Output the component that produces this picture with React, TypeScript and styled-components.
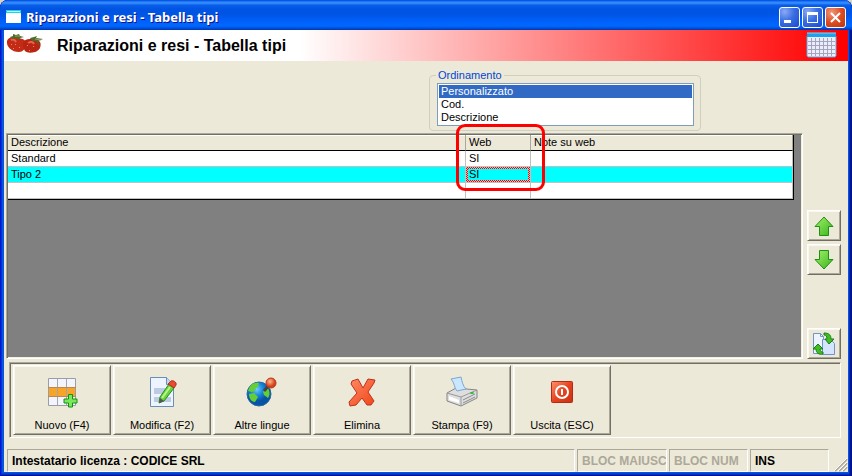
import React from "react";
import styled, { createGlobalStyle, css } from "styled-components";

const face = "#ece9d8";
const shade = "#aca899";
const dark = "#716f64";

const GlobalStyle = createGlobalStyle`
  * { box-sizing: border-box; }
  body {
    margin: 0;
    background: #d8d4c4;
    font: 11px/13px "Liberation Sans", Arial, sans-serif;
    color: #000;
  }
  button, select { font: inherit; color: inherit; }
`;

const Window = styled.div`
  min-height: 100vh;
  display: flex;
  flex-direction: column;
  overflow: hidden;
  padding: 0 4px 4px;
  border-radius: 8px 8px 0 0;
  background: #0855dd;
  box-shadow: inset 1px 0 #0019cf, inset -2px -1px #00138c, inset 2px 0 #0831d9, inset -3px -2px #0030c8, inset 0 -3px #0441d8;
`;

const TitleBar = styled.header`
  height: 30px;
  flex: none;
  display: flex;
  align-items: center;
  gap: 4px;
  margin: 0 -4px;
  padding: 4px 6px 0;
  border-radius: 8px 8px 0 0;
  background: linear-gradient(
    #0a3fc4 0, #0f6dfa 1px, #3a93ff 3px, #0a5fe8 5px, #0054e3 9px,
    #0054e3 14px, #0060fa 21px, #0068ff 26px, #0052dc 28px, #0036b4 30px
  );
`;

const Title = styled.h1`
  flex: 1;
  margin: 0;
  font: bold 13px/18px "Noto Sans", "Open Sans", sans-serif;
  color: #fff;
  text-shadow: 1px 1px #0f1089;
`;

const Captions = styled.div`
  display: flex;
  gap: 2px;
`;

const CaptionButton = styled.button<{ $danger?: boolean }>`
  width: 21px;
  height: 21px;
  padding: 0;
  border: 1px solid #fff;
  border-radius: 3px;
  background: ${(p) =>
    p.$danger
      ? "radial-gradient(circle at 30% 25%, #f09a7c, #dc4c22 50%, #b93410)"
      : "radial-gradient(circle at 25% 20%, #8aaaf5, #3a6ee2 45%, #1a49cf)"};
  svg { display: block; }
`;

const Banner = styled.div`
  height: 31px;
  flex: none;
  display: flex;
  align-items: center;
  justify-content: space-between;
  padding: 0 11px 0 2px;
  background: linear-gradient(90deg, #fff 35%, #f00 99%);
`;

const BannerLead = styled.div`
  display: flex;
  align-items: center;
  gap: 11px;
`;

const BannerTitle = styled.h2`
  margin: 0;
  font: bold 16px/20px "Liberation Sans", Arial, sans-serif;
`;

const Body = styled.main`
  flex: 1;
  display: flex;
  flex-direction: column;
  background: ${face};
  padding: 8px 2px 0;
`;

const OrderGroup = styled.fieldset`
  width: 272px;
  margin: 0 0 0 423px;
  padding: 1px 6px 4px 7px;
  border: 1px solid #d0d0bf;
  border-radius: 4px;
`;

const Legend = styled.legend`
  margin-left: -1px;
  padding: 0 2px;
  color: #0046d5;
`;

const OrderList = styled.select`
  display: block;
  width: 100%;
  height: 43px;
  padding: 1px;
  border: 1px solid #7f9db9;
  border-radius: 0;
  background: #fff;
  overflow: hidden;
  outline: none;
  option {
    min-height: 13px;
    height: 13px;
    padding: 0 2px;
  }
  option:checked {
    background: #316ac5 linear-gradient(#316ac5, #316ac5);
    color: #fff !important;
  }
`;

const Workspace = styled.div`
  flex: 1;
  display: flex;
  gap: 4px;
  margin-top: 2px;
  padding-right: 5px;
`;

const GridFrame = styled.div`
  flex: 1;
  min-width: 0;
  padding-right: 9px;
  background: #808080;
  border: 1px solid ${shade};
  border-right-color: #fff;
  border-bottom-color: #fff;
  box-shadow: inset 1px 1px ${dark}, inset -1px -1px #f1efe2;
`;

const Grid = styled.table`
  width: 100%;
  margin: 1px 0 0 1px;
  table-layout: fixed;
  border-spacing: 0;
  border-right: 1px solid #000;
  border-bottom: 1px solid #000;
`;

const cell = css`
  height: 16px;
  padding: 0 3px;
  line-height: 15px;
  text-align: left;
  font-weight: normal;
  border-right: 1px solid #c0c0c0;
`;

const HeadCell = styled.th<{ $width?: number }>`
  ${cell}
  position: relative;
  width: ${(p) => (p.$width ? `${p.$width}px` : "auto")};
  background: ${face};
  border-right-color: ${shade};
  border-bottom: 1px solid #000;
  box-shadow: inset 0 1px #fff;
`;

const Cell = styled.td<{ $active?: boolean; $focus?: boolean }>`
  ${cell}
  background: ${(p) => (p.$active ? "#0ff" : "#fff")};
  border-bottom: 1px solid #c0c0c0;
  ${(p) => p.$focus && css`
    background:
      linear-gradient(#0ff, #0ff) center / calc(100% - 4px) calc(100% - 4px) no-repeat padding-box,
      repeating-conic-gradient(#f00 0 25%, #b8c8c8 0 50%) 0 0 / 2px 2px padding-box;
  `}
`;

const Highlight = styled.span`
  position: absolute;
  z-index: 1;
  left: -10px;
  top: -11px;
  width: 89px;
  height: 67px;
  border: 3px solid #f00;
  border-radius: 9px;
  pointer-events: none;
`;

const SideBar = styled.div`
  display: flex;
  flex-direction: column;
  justify-content: flex-end;
  gap: 3px;
`;

const raised = css`
  border: 1px solid #fff;
  border-right-color: ${dark};
  border-bottom-color: ${dark};
  box-shadow: inset 1px 1px #f8f7f0, inset -1px -1px ${shade};
  background: ${face};
`;

const SideButton = styled.button<{ $spaced?: boolean }>`
  ${raised}
  width: 34px;
  height: 31px;
  padding: 0;
  display: grid;
  place-items: center;
  margin-bottom: ${(p) => (p.$spaced ? "50px" : 0)};
`;

const ToolBar = styled.nav`
  display: flex;
  gap: 2px;
  margin: 3px 5px 0 3px;
  padding: 2px 3px;
  border: 1px solid ${shade};
  border-right-color: #fff;
  border-bottom-color: #fff;
  box-shadow: inset 1px 1px ${dark};
`;

const ToolButton = styled.button`
  ${raised}
  width: 98px;
  height: 70px;
  padding: 10px 0 0;
  display: flex;
  flex-direction: column;
  align-items: center;
  gap: 11px;
`;

const StatusBar = styled.footer`
  display: flex;
  gap: 2px;
  height: 23px;
  margin-top: 11px;
  padding-left: 1px;
  font-size: 12px;
  font-weight: bold;
`;

const Panel = styled.div<{ $width?: number; $off?: boolean }>`
  flex: ${(p) => (p.$width ? `0 0 ${p.$width}px` : "1 1 0")};
  padding-left: 4px;
  line-height: 22px;
  white-space: nowrap;
  overflow: hidden;
  color: ${(p) => (p.$off ? shade : "#000")};
  border: 1px solid ${shade};
  border-right-color: #fff;
  border-bottom-color: #fff;
`;

const Grip = styled.svg`
  flex: none;
  align-self: flex-end;
  margin: 0 -2px 0 3px;
`;

const Strawberries = () => (
  <svg width="40" height="26" viewBox="0 0 40 26" aria-hidden="true">
    <path d="M1 8C2 4 8 3 13 5c5 1 8 3 7 7-1 4-3 7-7 7C6 19 0 14 1 8Z" fill="#c32b17" />
    <path d="M18 8c4-3 13-3 16 1 2 4-1 9-5 10-4 1-8 1-10-1-2-3-3-8-1-10Z" fill="#b92413" />
    <path d="M5 7c2-1 4 0 5 2M22 10c3-2 5-1 6 1" stroke="#e4634a" strokeWidth="2" fill="none" />
    <path d="M5 11l1 1m3-1 1 1m-3 3 1 1m5-2 1 1m7-3 1 1m5 0 1 1m-5 3 1 1" stroke="#e88b5c" />
    <path d="m4 4 3-1V1l3 1 3-1 1 2 4 1-4 1-1 2-3-2-4 1Zm20 1 4-1 3-1-1 2 7 1-5 2 2 6-4-6-4 0Z" fill="#4c6b2c" />
    <path d="M9 3h5m15 3 6 1" stroke="#96a562" />
  </svg>
);

const Calendar = () => (
  <svg width="31" height="27" viewBox="0 0 31 27" aria-hidden="true">
    <path d="M1 4h29v20l-1 1H2l-1-1Z" fill="#ececff" stroke="#64a4d4" />
    <path d="M1 1h29v4H1Z" fill="#1ba4ee" />
    <path d="M1 1h29" stroke="#7fd8ff" />
    <path d="M5.500 6v18m4-18v18m4-18v18m4-18v18m4-18v18m4-18v18M2 9.500h27m-27 4h27m-27 4h27m-27 4h27" stroke="#a5a5b9" />
  </svg>
);

const Arrow = ({ down }: { down?: boolean }) => (
  <svg width="20" height="20" viewBox="0 0 20 20" aria-hidden="true">
    <defs>
      <linearGradient id={down ? "arrowDown" : "arrowUp"} x2="1" y2="1">
        <stop offset="0" stopColor="#a5f06c" />
        <stop offset="1" stopColor="#35b419" />
      </linearGradient>
    </defs>
    <path
      d={down ? "M5.500 .5h9v9H19L10 19 1 9.500h4.500Z" : "M10 1l9 9.500h-4.500v9h-9v-9H1Z"}
      fill={down ? "url(#arrowDown)" : "url(#arrowUp)"}
      stroke="#1f8f16"
    />
  </svg>
);

const Refresh = () => (
  <svg width="24" height="24" viewBox="0 0 24 24" aria-hidden="true">
    <path d="M1.500 1.500h7l3 3v17h-10Z" fill="#eef4ff" stroke="#7295c7" />
    <path d="M8.500 1.500v3h3" fill="none" stroke="#7295c7" />
    <path d="M10.500 7.500h8l4 4v11h-12Z" fill="#d6e5ff" stroke="#7295c7" />
    <path d="M12 1c5 0 7 2 7 6h3l-5 5-4-5h2c0-3-1-4-3-4Z" fill="#42bd23" stroke="#168016" />
    <path d="M11 22c-4 1-7-1-7-5H1l5-5 5 5H8c0 2 1 3 3 3Z" fill="#42bd23" stroke="#168016" />
  </svg>
);

const NewIcon = () => (
  <svg width="32" height="32" viewBox="0 0 32 32" aria-hidden="true">
    <path d="M2.500 2.500h27v27h-27Z" fill="#f4f4fd" stroke="#9a9da8" />
    <path d="M3 12h26v8H3Z" fill="#f8a427" />
    <path d="M11.500 3v26m9-26v26" stroke="#a3a6b0" />
    <path d="M2 11.500h28M2 20.500h28" stroke="#b98a4c" />
    <path d="M22.500 18.500h4v4.500h4.500v4h-4.500v4h-4v-4H18v-4h4.500Z" fill="#7be957" stroke="#119016" />
  </svg>
);

const EditIcon = () => (
  <svg width="32" height="32" viewBox="0 0 32 32" aria-hidden="true">
    <path d="M4.500 1.500h16l7 7v22h-23Z" fill="#edf4ff" stroke="#6b8eb9" />
    <path d="M20.500 1.500v7h7" fill="#bdd7f5" stroke="#6b8eb9" />
    <path d="M8 12h11v6H8Zm0 9h17v5H8Z" fill="#bdcbe2" />
    <path d="m14 21 9-13 5 4-10 13-5 2Z" fill="#6ad33c" stroke="#278b1f" />
    <path d="m22 8 3-3c2-1 6 1 5 4l-2 3Z" fill="#e8492f" stroke="#b12d20" />
    <path d="m16 22 8-11" stroke="#b8f685" strokeWidth="2" />
    <path d="m14 22 4 3-5 2Z" fill="#555" />
  </svg>
);

const GlobeIcon = () => (
  <svg width="32" height="32" viewBox="0 0 32 32" aria-hidden="true">
    <defs>
      <radialGradient id="sea" cx=".4" cy=".3">
        <stop offset="0" stopColor="#74ccff" />
        <stop offset=".5" stopColor="#1a8cdf" />
        <stop offset="1" stopColor="#0753a4" />
      </radialGradient>
      <radialGradient id="pin" cx=".4" cy=".35">
        <stop offset="0" stopColor="#ffb68c" />
        <stop offset="1" stopColor="#d53e16" />
      </radialGradient>
    </defs>
    <circle cx="13" cy="18" r="12" fill="url(#sea)" stroke="#2869a7" />
    <path d="M3 12c2-4 6-6 10-5l-1 4-3 1 1 2-4 2-4-1Zm0 6 5-1 4 4-3 5C5 26 3 22 3 18Zm16-5 3-1c2 4 2 7 0 10l-4-3-1-3Z" fill="#65ce35" />
    <path d="m18 15 6-7" stroke="#444" strokeWidth="3" />
    <circle cx="25" cy="7" r="5" fill="url(#pin)" stroke="#b63b1d" />
  </svg>
);

const DeleteIcon = () => (
  <svg width="32" height="32" viewBox="0 0 32 32" aria-hidden="true">
    <defs>
      <linearGradient id="cross" x2="1" y2="1">
        <stop offset="0" stopColor="#ff8b64" />
        <stop offset="1" stopColor="#f04417" />
      </linearGradient>
    </defs>
    <path d="m6 5 6-2 5 9 5-9 7 1-1 3-6 9 6 9-3 4h-4l-5-7-6 7-6 1-1-4 8-9-6-9Z" fill="url(#cross)" stroke="#bd321e" strokeLinejoin="round" />
  </svg>
);

const PrintIcon = () => (
  <svg width="32" height="32" viewBox="0 0 32 32" aria-hidden="true">
    <path d="m1 17 9-5 21 2v8l-16 8-14-5Z" fill="#dedede" stroke="#858585" />
    <path d="m1 17 14 4 16-7M15 21v9" stroke="#999" fill="none" />
    <path d="m3 20 10 4v3L3 24Z" fill="#fff" />
    <path d="m17 24 12-6m-12 9 12-6" stroke="#8b8b8b" />
    <path d="m5 3 10-2c1 5 2 9 5 12l-9 2C8 12 9 7 5 3Z" fill="#cae7ff" stroke="#7ca8cd" />
    <ellipse cx="26" cy="17" rx="2" ry="1" fill="#28bd32" />
  </svg>
);

const ExitIcon = () => (
  <svg width="32" height="32" viewBox="0 0 32 32" aria-hidden="true">
    <defs>
      <linearGradient id="power" x2="1" y2="1">
        <stop offset="0" stopColor="#ff9270" />
        <stop offset=".5" stopColor="#e64420" />
        <stop offset="1" stopColor="#c83013" />
      </linearGradient>
    </defs>
    <rect x="5.500" y="5.500" width="21" height="21" rx="1" fill="url(#power)" stroke="#b52a13" />
    <circle cx="16" cy="16" r="6" fill="none" stroke="#fff" strokeWidth="2" />
    <path d="M16 13v6" stroke="#fff" strokeWidth="2" />
  </svg>
);

const rows = [
  { name: "Standard", web: "SI", note: "" },
  { name: "Tipo 2", web: "SI", note: "", active: true },
  { name: "", web: "", note: "" },
];

const actions = [
  { label: "Nuovo (F4)", Icon: NewIcon },
  { label: "Modifica (F2)", Icon: EditIcon },
  { label: "Altre lingue", Icon: GlobeIcon },
  { label: "Elimina", Icon: DeleteIcon },
  { label: "Stampa (F9)", Icon: PrintIcon },
  { label: "Uscita (ESC)", Icon: ExitIcon },
];

export default function App() {
  return (
    <>
      <GlobalStyle />
      <Window>
        <TitleBar>
          <svg width="16" height="14" viewBox="0 0 16 14" aria-hidden="true">
            <path d="M0 0h15v13H0Z" fill="#fff" />
            <path d="M0 0h15v3H0Z" fill="#18d5e5" />
            <path d="M1 1h13v1H1Z" fill="#bdf8ff" />
          </svg>
          <Title>Riparazioni e resi - Tabella tipi</Title>
          <Captions>
            <CaptionButton aria-label="Riduci a icona">
              <svg width="19" height="19"><path d="M4 12h7v3H4Z" fill="#fff" /></svg>
            </CaptionButton>
            <CaptionButton aria-label="Ingrandisci">
              <svg width="19" height="19"><path d="M4 4h11v11H4Zm1 3v7h9V7Z" fill="#fff" fillRule="evenodd" /></svg>
            </CaptionButton>
            <CaptionButton aria-label="Chiudi" $danger>
              <svg width="19" height="19"><path d="m5 5 9 9m0-9-9 9" stroke="#fff" strokeWidth="2" /></svg>
            </CaptionButton>
          </Captions>
        </TitleBar>
        <Banner>
          <BannerLead>
            <Strawberries />
            <BannerTitle>Riparazioni e resi - Tabella tipi</BannerTitle>
          </BannerLead>
          <Calendar />
        </Banner>
        <Body>
          <OrderGroup>
            <Legend>Ordinamento</Legend>
            <OrderList size={3} defaultValue="Personalizzato" aria-label="Ordinamento">
              <option>Personalizzato</option>
              <option>Cod.</option>
              <option>Descrizione</option>
            </OrderList>
          </OrderGroup>
          <Workspace>
            <GridFrame>
              <Grid>
                <thead>
                  <tr>
                    <HeadCell>Descrizione</HeadCell>
                    <HeadCell $width={65}>Web<Highlight /></HeadCell>
                    <HeadCell $width={262}>Note su web</HeadCell>
                  </tr>
                </thead>
                <tbody>
                  {rows.map((row, i) => (
                    <tr key={i}>
                      <Cell $active={row.active}>{row.name}</Cell>
                      <Cell $active={row.active} $focus={row.active}>{row.web}</Cell>
                      <Cell $active={row.active}>{row.note}</Cell>
                    </tr>
                  ))}
                </tbody>
              </Grid>
            </GridFrame>
            <SideBar>
              <SideButton aria-label="Sposta su"><Arrow /></SideButton>
              <SideButton aria-label="Sposta giù" $spaced><Arrow down /></SideButton>
              <SideButton aria-label="Aggiorna"><Refresh /></SideButton>
            </SideBar>
          </Workspace>
          <ToolBar>
            {actions.map(({ label, Icon }) => (
              <ToolButton key={label}>
                <Icon />
                {label}
              </ToolButton>
            ))}
          </ToolBar>
          <StatusBar>
            <Panel>Intestatario licenza : CODICE SRL</Panel>
            <Panel $width={90} $off>BLOC MAIUSC</Panel>
            <Panel $width={79} $off>BLOC NUM</Panel>
            <Panel $width={79}>INS</Panel>
            <Grip width="14" height="14" viewBox="0 0 14 14" aria-hidden="true">
              <path d="M1 13 13 1M5 13l8-8M9 13l4-4" stroke={shade} strokeWidth="2" />
              <path d="M0 13 13 0M4 13l9-9M8 13l5-5" stroke="#fff" />
            </Grip>
          </StatusBar>
        </Body>
      </Window>
    </>
  );
}
